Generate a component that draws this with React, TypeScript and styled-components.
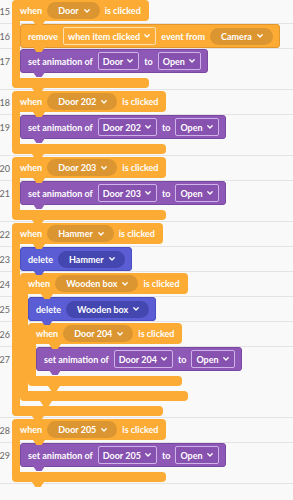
import React, { useLayoutEffect, useRef, useState } from 'react';
import styled, { createGlobalStyle, css } from 'styled-components';

const C = {
  bg: '#f9f9f9',
  line: '#e4e4e4',
  num: '#666666',
  orange: '#fcab34',
  orangeEdge: '#e3962b',
  orangePill: '#dc9631',
  orangeField: '#ffe0b0',
  purple: '#8e58b7',
  purpleEdge: '#7a47a1',
  purpleField: '#cfb2e8',
  purpleFieldBg: '#8751b0',
  blue: '#5a5dd3',
  blueEdge: '#4b4ec0',
  bluePill: '#4547b1',
};

type Tone = 'orange' | 'purple' | 'blue';

const toneBg: Record<Tone, string> = { orange: C.orange, purple: C.purple, blue: C.blue };
const toneEdge: Record<Tone, string> = { orange: C.orangeEdge, purple: C.purpleEdge, blue: C.blueEdge };
const tonePill: Record<Tone, string> = { orange: C.orangePill, purple: C.purpleFieldBg, blue: C.bluePill };
const toneFieldEdge: Record<Tone, string> = { orange: C.orangeField, purple: C.purpleField, blue: '#b9bbf0' };
const toneFieldBg: Record<Tone, string> = { orange: C.orange, purple: C.purpleFieldBg, blue: C.blue };

type Part =
  | { t: 'text'; v: string }
  | { t: 'pill'; v: string }
  | { t: 'field'; v: string };

type StmtNode = { kind: 'stmt'; line: number; tone: Tone; parts: Part[] };
type HatNode = { kind: 'hat'; id: string; line: number; target: string; body: Node[] };
type Node = StmtNode | HatNode;

const txt = (v: string): Part => ({ t: 'text', v });
const pill = (v: string): Part => ({ t: 'pill', v });
const field = (v: string): Part => ({ t: 'field', v });

const setAnim = (line: number, obj: string): StmtNode => ({
  kind: 'stmt',
  line,
  tone: 'purple',
  parts: [txt('set animation of'), field(obj), txt('to'), field('Open')],
});
const del = (line: number, obj: string): StmtNode => ({
  kind: 'stmt',
  line,
  tone: 'blue',
  parts: [txt('delete'), pill(obj)],
});
const hat = (line: number, target: string, body: Node[]): HatNode => ({
  kind: 'hat',
  id: `h${line}`,
  line,
  target,
  body,
});

const program: Node[] = [
  hat(15, 'Door', [
    {
      kind: 'stmt',
      line: 16,
      tone: 'orange',
      parts: [txt('remove'), field('when item clicked'), txt('event from'), pill('Camera')],
    },
    setAnim(17, 'Door'),
  ]),
  hat(18, 'Door 202', [setAnim(19, 'Door 202')]),
  hat(20, 'Door 203', [setAnim(21, 'Door 203')]),
  hat(22, 'Hammer', [
    del(23, 'Hammer'),
    hat(24, 'Wooden box', [del(25, 'Wooden box'), hat(26, 'Door 204', [setAnim(27, 'Door 204')])]),
  ]),
  hat(28, 'Door 205', [setAnim(29, 'Door 205')]),
];

type RowData = { line: number; depth: number; node: Node; closings: { id: string; depth: number }[] };

function flatten(nodes: Node[], depth = 0, out: RowData[] = []): RowData[] {
  for (const n of nodes) {
    out.push({ line: n.line, depth, node: n, closings: [] });
    if (n.kind === 'hat') {
      flatten(n.body, depth + 1, out);
      out[out.length - 1].closings.push({ id: n.id, depth });
    }
  }
  return out;
}

const Global = createGlobalStyle`
  html, body { margin: 0; padding: 0; background: ${C.bg}; }
  body { overflow: hidden; font-family: Lato, "Open Sans", "DejaVu Sans", sans-serif; }
`;

const Page = styled.div`
  width: 293px;
  overflow: hidden;
  margin-top: -2px;
  font-family: Lato, "Open Sans", "DejaVu Sans", sans-serif;
`;

const Row = styled.div<{ $tail: boolean }>`
  display: flex;
  flex-direction: column;
  border-top: 1px solid ${C.line};
  padding-bottom: ${(p) => (p.$tail ? '1px' : '0')};
`;

const Main = styled.div`
  display: flex;
  height: 24px;
`;

const LineNo = styled.div`
  flex: 0 0 12px;
  box-sizing: border-box;
  padding-right: 2px;
  display: flex;
  justify-content: flex-end;
  align-items: center;
  overflow: hidden;
  white-space: nowrap;
  font-size: 9px;
  color: ${C.num};
`;

const Arm = styled.div<{ $cover?: boolean }>`
  flex: 0 0 8px;
  background: ${C.orange};
  margin-top: ${(p) => (p.$cover ? '-1px' : '0')};
`;

const tab = (left: number) => css`
  &::after {
    content: '';
    position: absolute;
    z-index: 3;
    left: ${left}px;
    bottom: -5px;
    width: 12px;
    height: 5px;
    background: inherit;
    clip-path: polygon(0 0, 100% 0, 72% 100%, 28% 100%);
  }
`;

const blockText = css`
  position: relative;
  display: flex;
  align-items: center;
  gap: 5px;
  box-sizing: border-box;
  color: #fff;
  font-size: 9px;
  font-weight: 700;
  white-space: nowrap;
  flex: none;
`;

const StmtBlock = styled.div<{ $tone: Tone }>`
  ${blockText}
  height: 24px;
  padding: 0 6px 0 7px;
  border-radius: 3px;
  background: ${(p) => toneBg[p.$tone]};
  border: 1px solid ${(p) => toneEdge[p.$tone]};
  ${tab(12)}
`;

const HatCol = styled.div`
  display: flex;
  flex-direction: column;
  flex: none;
`;

const HatBar = styled.div`
  ${blockText}
  height: 21px;
  margin-top: 1px;
  padding: 0 8px;
  border-radius: 4px 4px 4px 0;
  background: ${C.orange};
  ${tab(21)}
`;

const HatStub = styled.div`
  width: 8px;
  flex: 1;
  background: ${C.orange};
`;

const Pill = styled.span<{ $tone: Tone }>`
  display: inline-flex;
  align-items: center;
  gap: 5px;
  height: 17px;
  padding: 0 10px 0 11px;
  border-radius: 9px;
  background: ${(p) => tonePill[p.$tone]};
`;

const Field = styled.span<{ $tone: Tone }>`
  display: inline-flex;
  align-items: center;
  gap: 4px;
  height: 18px;
  box-sizing: border-box;
  padding: 0 5px 0 4px;
  border-radius: 2px;
  border: 1px solid ${(p) => toneFieldEdge[p.$tone]};
  background: ${(p) => toneFieldBg[p.$tone]};
`;

const Closing = styled.div`
  display: flex;
  height: 15px;
`;

const Gutter = styled.div`
  flex: 0 0 12px;
`;

const Foot = styled.div`
  display: flex;
  flex-direction: column;
  flex: none;
`;

const FootArm = styled.div`
  width: 8px;
  height: 5px;
  background: ${C.orange};
`;

const FootBar = styled.div`
  position: relative;
  height: 10px;
  background: ${C.orange};
  border-radius: 0 4px 4px 4px;
  ${tab(20)}
`;

const EndRow = styled.div`
  border-top: 1px solid ${C.line};
  height: 30px;
`;

const Chevron = () => (
  <svg width="6" height="4" viewBox="0 0 6 4" aria-hidden="true">
    <polyline points="0.8,0.7 3,3 5.2,0.7" fill="none" stroke="#fff" strokeWidth="1.3" strokeLinecap="round" strokeLinejoin="round" />
  </svg>
);

const Parts: React.FC<{ parts: Part[]; tone: Tone }> = ({ parts, tone }) => (
  <>
    {parts.map((p, i) => {
      if (p.t === 'text') return <span key={i}>{p.v}</span>;
      if (p.t === 'pill')
        return (
          <Pill key={i} $tone={tone}>
            {p.v}
            <Chevron />
          </Pill>
        );
      return (
        <Field key={i} $tone={tone}>
          {p.v}
          <Chevron />
        </Field>
      );
    })}
  </>
);

export default function App() {
  const rows = flatten(program);
  const hatRefs = useRef<Record<string, HTMLDivElement | null>>({});
  const [widths, setWidths] = useState<Record<string, number>>({});

  useLayoutEffect(() => {
    const measure = () => {
      const w: Record<string, number> = {};
      for (const [id, el] of Object.entries(hatRefs.current)) {
        if (el) w[id] = el.getBoundingClientRect().width;
      }
      setWidths(w);
    };
    measure();
    if (document.fonts && document.fonts.ready) document.fonts.ready.then(measure);
  }, []);

  return (
    <>
      <Global />
      <Page>
        {rows.map((r) => {
          const n = r.node;
          const tail = r.closings.some((c) => c.depth === 0);
          return (
            <Row key={r.line} $tail={tail}>
              <Main>
                <LineNo>{r.line}</LineNo>
                {Array.from({ length: r.depth }, (_, i) => (
                  <Arm key={i} $cover />
                ))}
                {n.kind === 'hat' ? (
                  <HatCol>
                    <HatBar ref={(el) => { hatRefs.current[n.id] = el; }}>
                      <span>when</span>
                      <Pill $tone="orange">
                        {n.target}
                        <Chevron />
                      </Pill>
                      <span>is clicked</span>
                    </HatBar>
                    <HatStub />
                  </HatCol>
                ) : (
                  <StmtBlock $tone={n.tone}>
                    <Parts parts={n.parts} tone={n.tone} />
                  </StmtBlock>
                )}
              </Main>
              {r.closings.map((c) => (
                <Closing key={c.id}>
                  <Gutter />
                  {Array.from({ length: c.depth }, (_, i) => (
                    <Arm key={i} />
                  ))}
                  <Foot>
                    <FootArm />
                    <FootBar style={{ width: widths[c.id] ?? 120 }} />
                  </Foot>
                </Closing>
              ))}
            </Row>
          );
        })}
        <EndRow />
      </Page>
    </>
  );
}
